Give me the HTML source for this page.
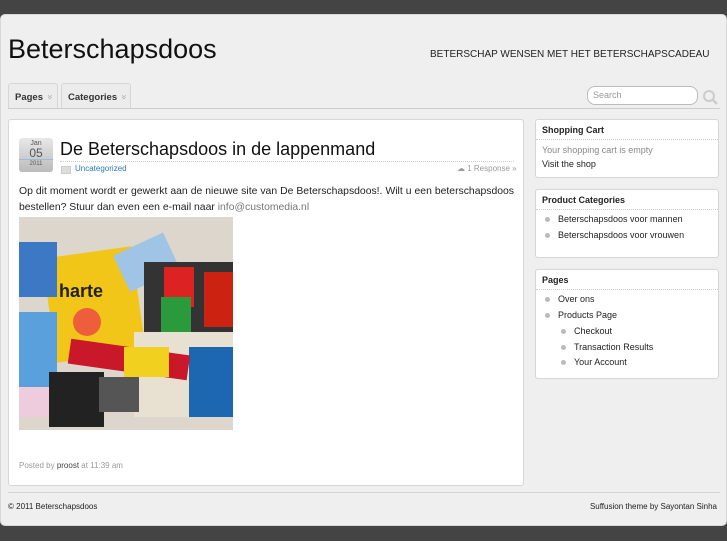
<!DOCTYPE html>
<html><head><meta charset="utf-8"><style>
*{margin:0;padding:0;box-sizing:border-box}
body{width:727px;height:545px;background:#fff;font-family:"Liberation Sans",sans-serif;position:relative;overflow:hidden}
.top{position:absolute;left:0;top:0;width:727px;height:541px;background:#444}
.page{position:absolute;left:0;top:14px;width:727px;height:512px;background:#efefef;border-radius:5px;border:1px solid #d8d8d8}
.a{position:absolute}
.title{left:8px;top:34px;font-size:27px;color:#111}
.desc{left:430px;top:49px;font-size:10px;color:#222;white-space:nowrap}
.tab{top:83px;height:26px;border:1px solid #d6d6d6;border-bottom:none;border-radius:3px 3px 0 0;background:#ececec;font-size:9.5px;font-weight:bold;color:#333;padding:8px 0 0 6px;white-space:nowrap}
.tab span{display:inline-block;color:#aaa;font-weight:normal;font-size:9px;margin-left:5px;transform:rotate(90deg)}
.navline{left:8px;top:108px;width:712px;height:1px;background:#ccc}
.search{left:587px;top:86px;width:111px;height:19px;border:1px solid #bbb;border-radius:8px;background:#fff;font-size:9px;color:#999;padding:3px 5px}
.post{left:8px;top:119px;width:516px;height:367px;background:#fff;border:1px solid #d6d6d6;border-radius:3px}
.date{left:19px;top:138px;width:34px;height:34px;border-radius:3px;background:linear-gradient(#e8e8e8,#bbb);text-align:center;color:#555}
.ptitle{left:60px;top:139px;font-size:18px;color:#111}
.dot{left:60px;top:161px;width:454px;border-top:1px dotted #ccc}
.cat{left:75px;top:164px;font-size:8px;color:#2a7ab8}
.resp{left:457px;top:164px;font-size:8px;color:#999}
.body{left:19px;top:184px;width:495px;font-size:10.4px;line-height:16px;color:#222;text-align:justify}
.box{left:535px;width:184px;background:#fff;border:1px solid #d6d6d6;border-radius:3px}
.box h4{font-size:9px;color:#222;padding:5px 6px 4px;border-bottom:1px dotted #ccc}
.box li{list-style:none;font-size:9px;color:#222;position:relative;padding-left:22px;height:16px}
.box li:before{content:"";position:absolute;left:9px;top:3px;width:5px;height:5px;border-radius:50%;background:#bbb}
.box li.s{padding-left:38px;height:15.5px}.box li.s:before{left:25px}
.foot{left:8px;top:492px;width:712px;height:1px;background:#d4d4d4}
.ft{top:502px;font-size:8px;color:#222}
</style></head><body>
<div class="top"></div>
<div class="page"></div>
<div class="a title">Beterschapsdoos</div>
<div class="a desc">BETERSCHAP WENSEN MET HET BETERSCHAPSCADEAU</div>
<div class="a tab" style="left:8px;width:50px">Pages<span>»</span></div>
<div class="a tab" style="left:61px;width:70px">Categories<span>»</span></div>
<div class="a navline"></div>
<div class="a search">Search</div>
<svg class="a" style="left:702px;top:89px" width="16" height="16"><circle cx="7" cy="7" r="5" fill="none" stroke="#ccc" stroke-width="2"/><line x1="10.5" y1="10.5" x2="15" y2="15" stroke="#ccc" stroke-width="2.5"/></svg>
<div class="a post"></div>
<div class="a date"><div style="font-size:7px;padding-top:2px">Jan</div><div style="font-size:12px;line-height:12px;border-bottom:1px solid #9bd">05</div><div style="font-size:6px;padding-top:1px">2011</div></div>
<div class="a ptitle">De Beterschapsdoos in de lappenmand</div>
<div class="a dot"></div>
<div class="a" style="left:61px;top:166px;width:10px;height:8px;background:#ddd;border:1px solid #ccc"></div>
<div class="a cat">Uncategorized</div>
<div class="a resp">&#9729; 1 Response »</div>
<div class="a body">Op dit moment wordt er gewerkt aan de nieuwe site van De Beterschapsdoos!. Wilt u een beterschapsdoos bestellen? Stuur dan even een e-mail naar <span style="color:#777">info@customedia.nl</span></div>
<svg class="a" style="left:19px;top:217px" width="214" height="213">
<rect width="214" height="213" fill="#dcd6cc"/>
<rect x="30" y="35" width="90" height="105" fill="#f2c618" transform="rotate(-8 75 88)"/>
<rect x="0" y="25" width="38" height="55" fill="#3d78c4"/>
<rect x="0" y="95" width="38" height="75" fill="#5aa0dc"/>
<rect x="100" y="25" width="55" height="40" fill="#9fc4e6" transform="rotate(-25 128 45)"/>
<rect x="125" y="45" width="89" height="70" fill="#333"/>
<rect x="145" y="50" width="30" height="40" fill="#d22"/>
<rect x="185" y="55" width="29" height="55" fill="#c21"/>
<rect x="142" y="80" width="30" height="50" fill="#2a9a3a"/>
<rect x="115" y="115" width="99" height="85" fill="#e8e0d0"/>
<rect x="170" y="130" width="44" height="70" fill="#1d66b0"/>
<rect x="50" y="130" width="120" height="25" fill="#c8182a" transform="rotate(8 110 142)"/>
<rect x="105" y="130" width="45" height="30" fill="#f2d020"/>
<rect x="30" y="155" width="55" height="55" fill="#222"/>
<rect x="80" y="160" width="40" height="35" fill="#555"/>
<rect x="0" y="170" width="30" height="30" fill="#ecd"/>
<text x="40" y="80" font-size="18" font-weight="bold" fill="#222" font-family="Liberation Sans">harte</text>
<circle cx="68" cy="105" r="14" fill="#e44" opacity=".8"/>
</svg>
<div class="a" style="left:19px;top:461px;font-size:8px;color:#999">Posted by <span style="color:#444">proost</span> at 11:39 am</div>
<div class="a box" style="top:119px;height:59px"><h4>Shopping Cart</h4><div style="font-size:9px;color:#888;padding:5px 6px 2px">Your shopping cart is empty</div><div style="font-size:9px;color:#222;padding:2px 6px">Visit the shop</div></div>
<div class="a box" style="top:189px;height:69px"><h4>Product Categories</h4><ul style="padding-top:4px"><li>Beterschapsdoos voor mannen</li><li>Beterschapsdoos voor vrouwen</li></ul></div>
<div class="a box" style="top:269px;height:110px"><h4>Pages</h4><ul style="padding-top:4px"><li>Over ons</li><li>Products Page</li><li class="s">Checkout</li><li class="s">Transaction Results</li><li class="s">Your Account</li></ul></div>
<div class="a foot"></div>
<div class="a ft" style="left:8px">© 2011 Beterschapsdoos</div>
<div class="a ft" style="right:10px">Suffusion theme by Sayontan Sinha</div>
</body></html>
